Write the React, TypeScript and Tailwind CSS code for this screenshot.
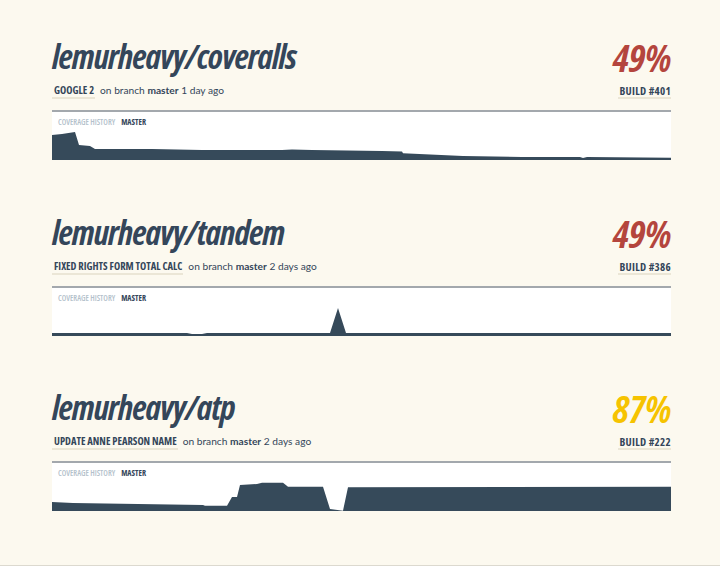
const cond = "font-['Open_Sans',sans-serif] font-stretch-[75%]";

type Repo = {
  name: string;
  commit: string;
  ago: string;
  pct: string;
  pctColor: string;
  build: string;
  points: [number, number][];
};

const repos: Repo[] = [
  {
    name: "lemurheavy/coveralls",
    commit: "GOOGLE 2",
    ago: "1 day ago",
    pct: "49%",
    pctColor: "text-[#b4453d]",
    build: "BUILD #401",
    points: [
      [0, 23], [10, 22], [23, 20], [27, 33], [38, 34], [43, 37], [100, 37], [150, 38],
      [230, 38], [240, 37.5], [260, 38], [330, 39], [350, 39.5], [351, 41.3], [411, 44],
      [470, 45], [528, 45], [531, 46], [535, 45], [619, 45.7],
    ],
  },
  {
    name: "lemurheavy/tandem",
    commit: "FIXED RIGHTS FORM TOTAL CALC",
    ago: "2 days ago",
    pct: "49%",
    pctColor: "text-[#b4453d]",
    build: "BUILD #386",
    points: [
      [0, 45], [135, 45], [140, 46], [150, 46], [155, 45], [278, 45], [286, 20], [294, 45], [619, 45],
    ],
  },
  {
    name: "lemurheavy/atp",
    commit: "UPDATE ANNE PEARSON NAME",
    ago: "2 days ago",
    pct: "87%",
    pctColor: "text-[#f6c300]",
    build: "BUILD #222",
    points: [
      [0, 39], [21, 40], [151, 42], [153, 42.7], [175, 42.7], [180, 34], [185, 34], [188, 22],
      [205, 21], [210, 19.7], [231, 19.7], [236, 23.7], [271, 23.7], [278, 46], [291, 47.7],
      [296, 24.3], [619, 23.7],
    ],
  },
];

function History({ points }: { points: [number, number][] }) {
  const d = "M0,48 " + points.map(([x, y]) => `L${x},${y}`).join(" ") + " L619,48 Z";
  return (
    <div className="relative h-[50px] border-t-2 border-[#a3a8ad] bg-white">
      <svg viewBox="0 0 619 48" preserveAspectRatio="none" className="block h-[48px] w-full">
        <path d={d} fill="#364a5a" />
      </svg>
      <div className={`absolute left-[6px] top-[5px] flex gap-[6px] text-[8px] font-semibold uppercase leading-[10px] ${cond}`}>
        <span className="text-[#b3c1cb]">Coverage History</span>
        <span className="font-bold text-[#34465a]">Master</span>
      </div>
    </div>
  );
}

function RepoRow({ repo }: { repo: Repo }) {
  return (
    <div className="h-[175.5px]">
      <div className="flex h-[40px] items-start justify-between">
        <h1 className={`text-[34px] font-bold italic leading-[40px] tracking-[-1px] text-[#34465a] ${cond}`}>
          {repo.name}
        </h1>
        <div className={`mt-[1px] text-[38px] font-bold italic leading-[40px] tracking-[-0.5px] ${repo.pctColor} ${cond}`}>
          {repo.pct}
        </div>
      </div>
      <div className="mt-[8px] flex items-start justify-between text-[#34465a]">
        <div className="flex items-start gap-[5px]">
          <span className={`border-b-2 border-[#ebe6d6] pl-[2px] pr-[1px] text-[10.5px] font-bold uppercase leading-[13px] ${cond}`}>
            {repo.commit}
          </span>
          <span className="font-['Lato',sans-serif] text-[10.2px] leading-[13px]">
            on branch <b>master</b> {repo.ago}
          </span>
        </div>
        <span className={`border-b-2 border-[#ebe6d6] pl-[1px] text-[11px] font-bold uppercase leading-[13px] tracking-[0.3px] ${cond}`}>
          {repo.build}
        </span>
      </div>
      <div className="mt-[11px]">
        <History points={repo.points} />
      </div>
    </div>
  );
}

export default function App() {
  return (
    <div className="h-[566px] w-[720px] overflow-hidden border-b border-[#dcd9cf] bg-[#fcf9ef] pl-[52px] pr-[49px] pt-[36px]">
      {repos.map((r) => (
        <RepoRow key={r.name} repo={r} />
      ))}
    </div>
  );
}
